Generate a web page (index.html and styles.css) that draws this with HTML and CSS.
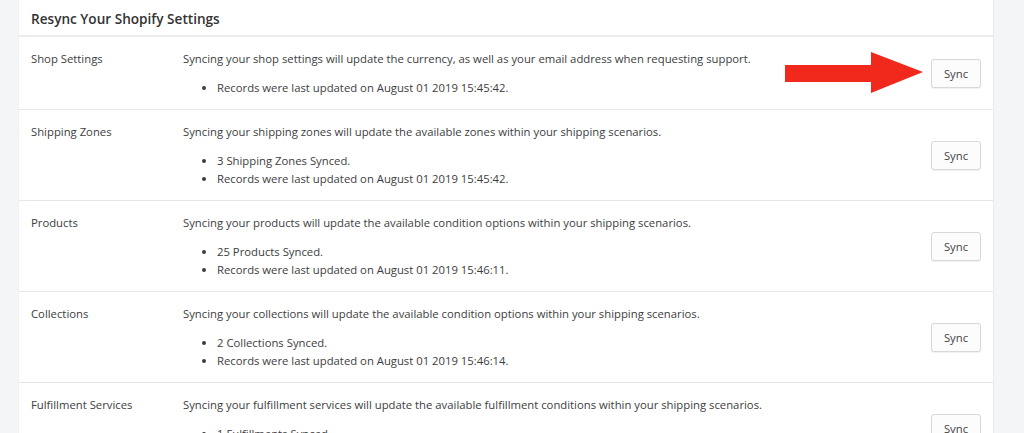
FILE: index.html
```html
<!DOCTYPE html>
<html>
<head>
<meta charset="utf-8">
<link rel="stylesheet" href="styles.css">
</head>
<body>
<div class="page">
  <div class="card">
    <div class="card-header">Resync Your Shopify Settings</div>
    <div class="row">
      <div class="label">Shop Settings</div>
      <div class="desc">
        <p>Syncing your shop settings will update the currency, as well as your email address when requesting support.</p>
        <ul>
          <li>Records were last updated on August 01 2019 15:45:42.</li>
        </ul>
      </div>
      <div class="action"><button class="btn">Sync</button></div>
      <svg class="arrow" width="140" height="44" viewBox="0 0 140 44">
        <polygon points="0,13 86,13 86,0 138,20 86,41 86,30 0,30" fill="#f1281c"/>
      </svg>
    </div>
    <div class="row">
      <div class="label">Shipping Zones</div>
      <div class="desc">
        <p>Syncing your shipping zones will update the available zones within your shipping scenarios.</p>
        <ul>
          <li>3 Shipping Zones Synced.</li>
          <li>Records were last updated on August 01 2019 15:45:42.</li>
        </ul>
      </div>
      <div class="action"><button class="btn">Sync</button></div>
    </div>
    <div class="row">
      <div class="label">Products</div>
      <div class="desc">
        <p>Syncing your products will update the available condition options within your shipping scenarios.</p>
        <ul>
          <li>25 Products Synced.</li>
          <li>Records were last updated on August 01 2019 15:46:11.</li>
        </ul>
      </div>
      <div class="action"><button class="btn">Sync</button></div>
    </div>
    <div class="row">
      <div class="label">Collections</div>
      <div class="desc">
        <p>Syncing your collections will update the available condition options within your shipping scenarios.</p>
        <ul>
          <li>2 Collections Synced.</li>
          <li>Records were last updated on August 01 2019 15:46:14.</li>
        </ul>
      </div>
      <div class="action"><button class="btn">Sync</button></div>
    </div>
    <div class="row">
      <div class="label">Fulfillment Services</div>
      <div class="desc">
        <p>Syncing your fulfillment services will update the available fulfillment conditions within your shipping scenarios.</p>
        <ul>
          <li>1 Fulfillments Synced.</li>
          <li>Records were last updated on August 01 2019 15:46:20.</li>
        </ul>
      </div>
      <div class="action"><button class="btn">Sync</button></div>
    </div>
  </div>
</div>
</body>
</html>
```
FILE: styles.css
```css
html, body {
  margin: 0;
  padding: 0;
  background: #f4f5f7;
  font-family: "Open Sans", "Noto Sans", Arial, sans-serif;
  color: #3d3d3d;
  overflow: hidden;
}
.page {
  padding-left: 18px;
  height: 433px;
  overflow: hidden;
}
.card {
  width: 974px;
  background: #fff;
  border-right: 1px solid #e9eaec;
  border-left: 1px solid #eeeff1;
}
.card-header {
  height: 37px;
  box-sizing: border-box;
  padding: 9px 12px 0;
  font-size: 13.6px;
  font-weight: 600;
  color: #333;
  border-bottom: 2px solid #ececec;
}
.row {
  position: relative;
  display: flex;
  align-items: center;
  border-bottom: 1px solid #e6e6e6;
  padding: 13px 12px 12px;
  font-size: 11.3px;
  line-height: 18px;
}
.label {
  align-self: flex-start;
  width: 152px;
  flex: none;
}
.desc {
  flex: 1;
  align-self: flex-start;
}
.desc p {
  margin: 0;
}
.desc ul {
  margin: 11px 0 0;
  padding-left: 34px;
}
.action {
  flex: none;
}
.btn {
  width: 50px;
  height: 29px;
  box-sizing: border-box;
  background: #fcfcfc;
  border: 1px solid #d6d8db;
  border-radius: 3px;
  font-family: inherit;
  font-size: 11.3px;
  color: #444;
  padding: 0;
  box-shadow: 0 1px 1px rgba(0,0,0,0.06);
}
.arrow {
  position: absolute;
  left: 766px;
  top: 15px;
}
```
